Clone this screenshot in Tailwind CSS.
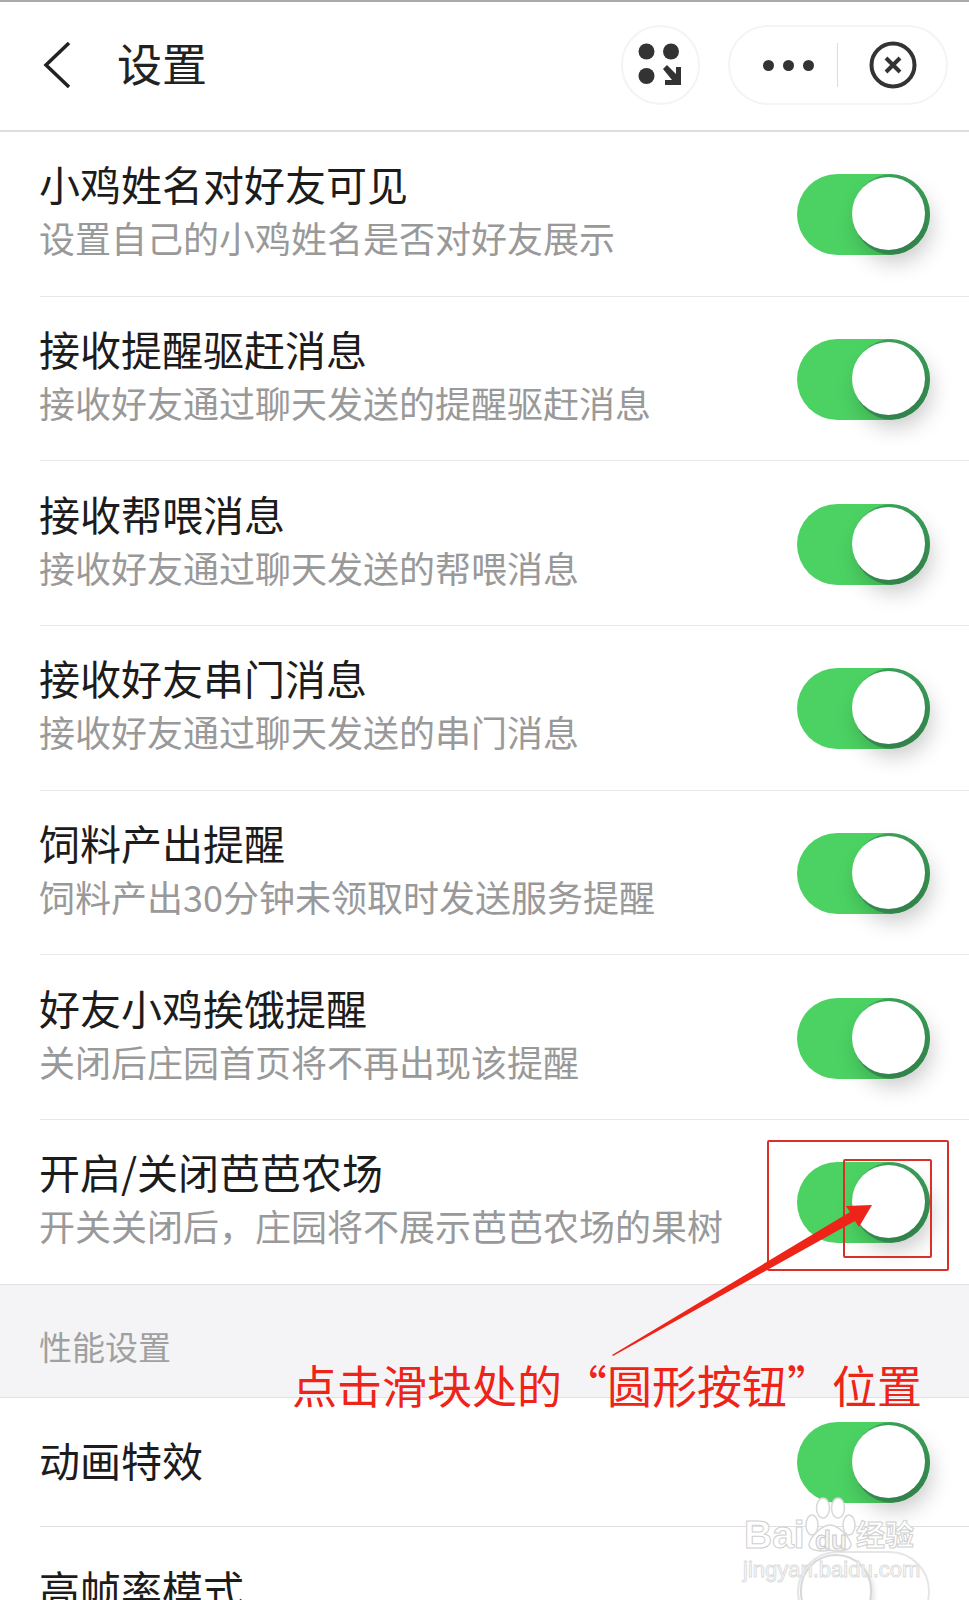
<!DOCTYPE html>
<html lang="zh-CN">
<head>
<meta charset="UTF-8">
<meta name="viewport" content="width=device-width, initial-scale=1.0">
<title>设置</title>
<script src="https://cdn.jsdelivr.net/npm/@tailwindcss/browser@4"></script>
</head>
<body class="bg-white">
<div class="relative w-[969px] h-[1600px] overflow-hidden bg-white font-['Noto_Sans_CJK_SC','Liberation_Sans',sans-serif]">

  <!-- Header -->
  <header class="flex items-center h-[132px] border-t-2 border-b-2 border-t-[#aaaaaa] border-b-[#dddddd] pl-[43px] pr-[21px]">
    <svg class="w-[28px] h-[46px] mt-[-3px]" viewBox="0 0 28 46" fill="none" stroke="#222222" stroke-width="3.5"><path d="M26 1 L3 23 L26 45"/></svg>
    <h1 class="ml-[46px] text-[45px] leading-none text-[#222222] mt-[-8px]">设置</h1>
    <div class="ml-auto flex items-center gap-[28px] mt-[-2px]">
      <div class="flex items-center justify-center w-[79px] h-[80px] rounded-full border-2 border-[#f4f4f4]">
        <svg class="w-[46px] h-[44px]" viewBox="0 0 46 44" fill="#333333"><circle cx="8.500" cy="8.500" r="8"/><circle cx="33" cy="8.500" r="8"/><circle cx="8.500" cy="33" r="8"/><path d="M25 26 L29 22 L38 31 L38 24 L43 24 L43 42 L27 42 L27 37 L34 37 Z"/></svg>
      </div>
      <div class="flex items-center w-[220px] h-[80px] rounded-full border-2 border-[#f4f4f4]">
        <div class="flex items-center gap-[9px] ml-[33px]">
          <span class="w-[11px] h-[11px] rounded-full bg-[#333333]"></span>
          <span class="w-[11px] h-[11px] rounded-full bg-[#333333]"></span>
          <span class="w-[11px] h-[11px] rounded-full bg-[#333333]"></span>
        </div>
        <div class="w-px h-[44px] bg-[#dddddd] ml-[23px]"></div>
        <svg class="w-[48px] h-[48px] ml-[31px]" viewBox="0 0 48 48" fill="none" stroke="#333333"><circle cx="24" cy="24" r="21.500" stroke-width="4"/><path d="M17 17 L31 31 M31 17 L17 31" stroke-width="4"/></svg>
      </div>
    </div>
  </header>

  <!-- Settings list -->
  <section>
    <div class="flex items-center justify-between h-[163.7px] pl-[39px] pr-[39px]">
      <div class="mt-[-7px]">
        <p class="text-[41px] leading-[54px] text-[#1c1c1c]">小鸡姓名对好友可见</p>
        <p class="text-[36px] leading-[54px] text-[#999999]">设置自己的小鸡姓名是否对好友展示</p>
      </div>
      <div class="relative w-[133px] h-[81px] mt-[2px]">
        <div class="w-full h-full overflow-hidden rounded-full bg-[#4cd263]"><div class="ml-[57px] w-[76px] h-[81px] rounded-full bg-[#3d9f5c]"></div></div>
        <div class="absolute right-[5px] top-[3px] w-[73px] h-[73px] rounded-full bg-white shadow-[6px_12px_22px_rgba(0,0,0,0.22)]"></div>
      </div>
    </div>
    <div class="ml-[40px] h-px bg-[#e8e8e8]"></div>

    <div class="flex items-center justify-between h-[163.7px] pl-[39px] pr-[39px]">
      <div class="mt-[-7px]">
        <p class="text-[41px] leading-[54px] text-[#1c1c1c]">接收提醒驱赶消息</p>
        <p class="text-[36px] leading-[54px] text-[#999999]">接收好友通过聊天发送的提醒驱赶消息</p>
      </div>
      <div class="relative w-[133px] h-[81px] mt-[2px]">
        <div class="w-full h-full overflow-hidden rounded-full bg-[#4cd263]"><div class="ml-[57px] w-[76px] h-[81px] rounded-full bg-[#3d9f5c]"></div></div>
        <div class="absolute right-[5px] top-[3px] w-[73px] h-[73px] rounded-full bg-white shadow-[6px_12px_22px_rgba(0,0,0,0.22)]"></div>
      </div>
    </div>
    <div class="ml-[40px] h-px bg-[#e8e8e8]"></div>

    <div class="flex items-center justify-between h-[163.7px] pl-[39px] pr-[39px]">
      <div class="mt-[-7px]">
        <p class="text-[41px] leading-[54px] text-[#1c1c1c]">接收帮喂消息</p>
        <p class="text-[36px] leading-[54px] text-[#999999]">接收好友通过聊天发送的帮喂消息</p>
      </div>
      <div class="relative w-[133px] h-[81px] mt-[2px]">
        <div class="w-full h-full overflow-hidden rounded-full bg-[#4cd263]"><div class="ml-[57px] w-[76px] h-[81px] rounded-full bg-[#3d9f5c]"></div></div>
        <div class="absolute right-[5px] top-[3px] w-[73px] h-[73px] rounded-full bg-white shadow-[6px_12px_22px_rgba(0,0,0,0.22)]"></div>
      </div>
    </div>
    <div class="ml-[40px] h-px bg-[#e8e8e8]"></div>

    <div class="flex items-center justify-between h-[163.7px] pl-[39px] pr-[39px]">
      <div class="mt-[-7px]">
        <p class="text-[41px] leading-[54px] text-[#1c1c1c]">接收好友串门消息</p>
        <p class="text-[36px] leading-[54px] text-[#999999]">接收好友通过聊天发送的串门消息</p>
      </div>
      <div class="relative w-[133px] h-[81px] mt-[2px]">
        <div class="w-full h-full overflow-hidden rounded-full bg-[#4cd263]"><div class="ml-[57px] w-[76px] h-[81px] rounded-full bg-[#3d9f5c]"></div></div>
        <div class="absolute right-[5px] top-[3px] w-[73px] h-[73px] rounded-full bg-white shadow-[6px_12px_22px_rgba(0,0,0,0.22)]"></div>
      </div>
    </div>
    <div class="ml-[40px] h-px bg-[#e8e8e8]"></div>

    <div class="flex items-center justify-between h-[163.7px] pl-[39px] pr-[39px]">
      <div class="mt-[-7px]">
        <p class="text-[41px] leading-[54px] text-[#1c1c1c]">饲料产出提醒</p>
        <p class="text-[36px] leading-[54px] text-[#999999]">饲料产出30分钟未领取时发送服务提醒</p>
      </div>
      <div class="relative w-[133px] h-[81px] mt-[2px]">
        <div class="w-full h-full overflow-hidden rounded-full bg-[#4cd263]"><div class="ml-[57px] w-[76px] h-[81px] rounded-full bg-[#3d9f5c]"></div></div>
        <div class="absolute right-[5px] top-[3px] w-[73px] h-[73px] rounded-full bg-white shadow-[6px_12px_22px_rgba(0,0,0,0.22)]"></div>
      </div>
    </div>
    <div class="ml-[40px] h-px bg-[#e8e8e8]"></div>

    <div class="flex items-center justify-between h-[163.7px] pl-[39px] pr-[39px]">
      <div class="mt-[-7px]">
        <p class="text-[41px] leading-[54px] text-[#1c1c1c]">好友小鸡挨饿提醒</p>
        <p class="text-[36px] leading-[54px] text-[#999999]">关闭后庄园首页将不再出现该提醒</p>
      </div>
      <div class="relative w-[133px] h-[81px] mt-[2px]">
        <div class="w-full h-full overflow-hidden rounded-full bg-[#4cd263]"><div class="ml-[57px] w-[76px] h-[81px] rounded-full bg-[#3d9f5c]"></div></div>
        <div class="absolute right-[5px] top-[3px] w-[73px] h-[73px] rounded-full bg-white shadow-[6px_12px_22px_rgba(0,0,0,0.22)]"></div>
      </div>
    </div>
    <div class="ml-[40px] h-px bg-[#e8e8e8]"></div>

    <div class="flex items-center justify-between h-[163.7px] pl-[39px] pr-[39px]">
      <div class="mt-[-7px]">
        <p class="text-[41px] leading-[54px] text-[#1c1c1c]">开启/关闭芭芭农场</p>
        <p class="text-[36px] leading-[54px] text-[#999999]">开关关闭后，庄园将不展示芭芭农场的果树</p>
      </div>
      <div class="relative w-[133px] h-[81px] mt-[2px]">
        <div class="w-full h-full overflow-hidden rounded-full bg-[#4cd263]"><div class="ml-[57px] w-[76px] h-[81px] rounded-full bg-[#3d9f5c]"></div></div>
        <div class="absolute right-[5px] top-[3px] w-[73px] h-[73px] rounded-full bg-white shadow-[6px_12px_22px_rgba(0,0,0,0.22)]"></div>
      </div>
    </div>
  </section>

  <!-- Performance section -->
  <div class="h-[114px] pl-[39px] pt-[36px] bg-[#f4f4f6] border-y border-[#e2e2e2] text-[33px] leading-[50px] text-[#a0a0a0]">性能设置</div>

  <section>
    <div class="flex items-center justify-between h-[128px] pl-[39px] pr-[39px]">
      <p class="text-[41px] leading-[54px] text-[#1c1c1c] mt-[-6px]">动画特效</p>
      <div class="relative w-[133px] h-[81px] mt-[2px]">
        <div class="w-full h-full overflow-hidden rounded-full bg-[#4cd263]"><div class="ml-[57px] w-[76px] h-[81px] rounded-full bg-[#3d9f5c]"></div></div>
        <div class="absolute right-[5px] top-[3px] w-[73px] h-[73px] rounded-full bg-white shadow-[6px_12px_22px_rgba(0,0,0,0.22)]"></div>
      </div>
    </div>
    <div class="ml-[40px] h-px bg-[#e0e0e0]"></div>
    <div class="flex items-center justify-between h-[128px] pl-[39px] pr-[39px]">
      <p class="text-[41px] leading-[54px] text-[#1c1c1c] mt-[-6px]">高帧率模式</p>
      <div class="relative w-[133px] h-[81px] mt-[2px] rounded-full border-2 border-[#e6e6e6] bg-white">
        <div class="absolute left-[1px] top-[1px] w-[72px] h-[74px] rounded-full bg-white border-2 border-[#d8d8d8] shadow-[2px_3px_5px_rgba(0,0,0,0.12)]"></div>
      </div>
    </div>
  </section>

  <!-- Annotation over the screenshot -->
  <div class="absolute left-[767px] top-[1140px] w-[182px] h-[131px] border-2 border-[#d9302a] rounded-[2px]"></div>
  <div class="absolute left-[843px] top-[1159px] w-[89px] h-[99px] border-2 border-[#d9302a] rounded-[2px]"></div>
  <svg class="absolute left-0 top-0 w-[969px] h-[1600px] pointer-events-none" viewBox="0 0 969 1600" fill="#ee2418"><path d="M612 1355 L850 1212 L846 1206 L872 1205 L859 1227 L855 1221 L613 1356 Z"/></svg>
  <p class="absolute left-[292px] top-[1354px] text-[45px] leading-[62px] text-[#ee2418] whitespace-nowrap">点击滑块处的“圆形按钮”位置</p>

  <!-- Baidu watermark -->
  <div class="absolute left-[743px] top-[1497px] w-[180px] h-[90px] text-white">
    <svg class="absolute left-[60px] top-0 w-[54px] h-[56px]" viewBox="0 0 54 56" fill="#ffffff" stroke="#d8d8d8" stroke-width="1.500"><ellipse cx="9" cy="28" rx="6" ry="10"/><ellipse cx="20" cy="11" rx="6.500" ry="10"/><ellipse cx="35" cy="11" rx="6.500" ry="10"/><ellipse cx="46" cy="28" rx="6" ry="10"/><path d="M27 28 C18 28 6 42 6 48 C6 54 20 55 27 53 C34 55 48 54 48 48 C48 42 36 28 27 28 Z"/></svg>
    <p class="absolute left-[1px] top-[13px] text-[39px] leading-[50px] font-bold font-['Liberation_Sans',sans-serif] whitespace-nowrap [-webkit-text-stroke:1px_#d0d0d0]">Bai</p>
    <p class="absolute left-[72px] top-[26px] text-[26px] leading-[34px] font-bold font-['Liberation_Sans',sans-serif] text-[#f4f4f4] [-webkit-text-stroke:1px_#cccccc]">du</p>
    <p class="absolute left-[113px] top-[15px] text-[29px] leading-[42px] font-bold whitespace-nowrap [-webkit-text-stroke:1px_#d0d0d0]">经验</p>
    <p class="absolute left-[0px] top-[59px] text-[22px] leading-[28px] font-['Liberation_Sans',sans-serif] whitespace-nowrap [-webkit-text-stroke:1px_#dddddd]">jingyan.baidu.com</p>
  </div>
</div>
</body>
</html>
